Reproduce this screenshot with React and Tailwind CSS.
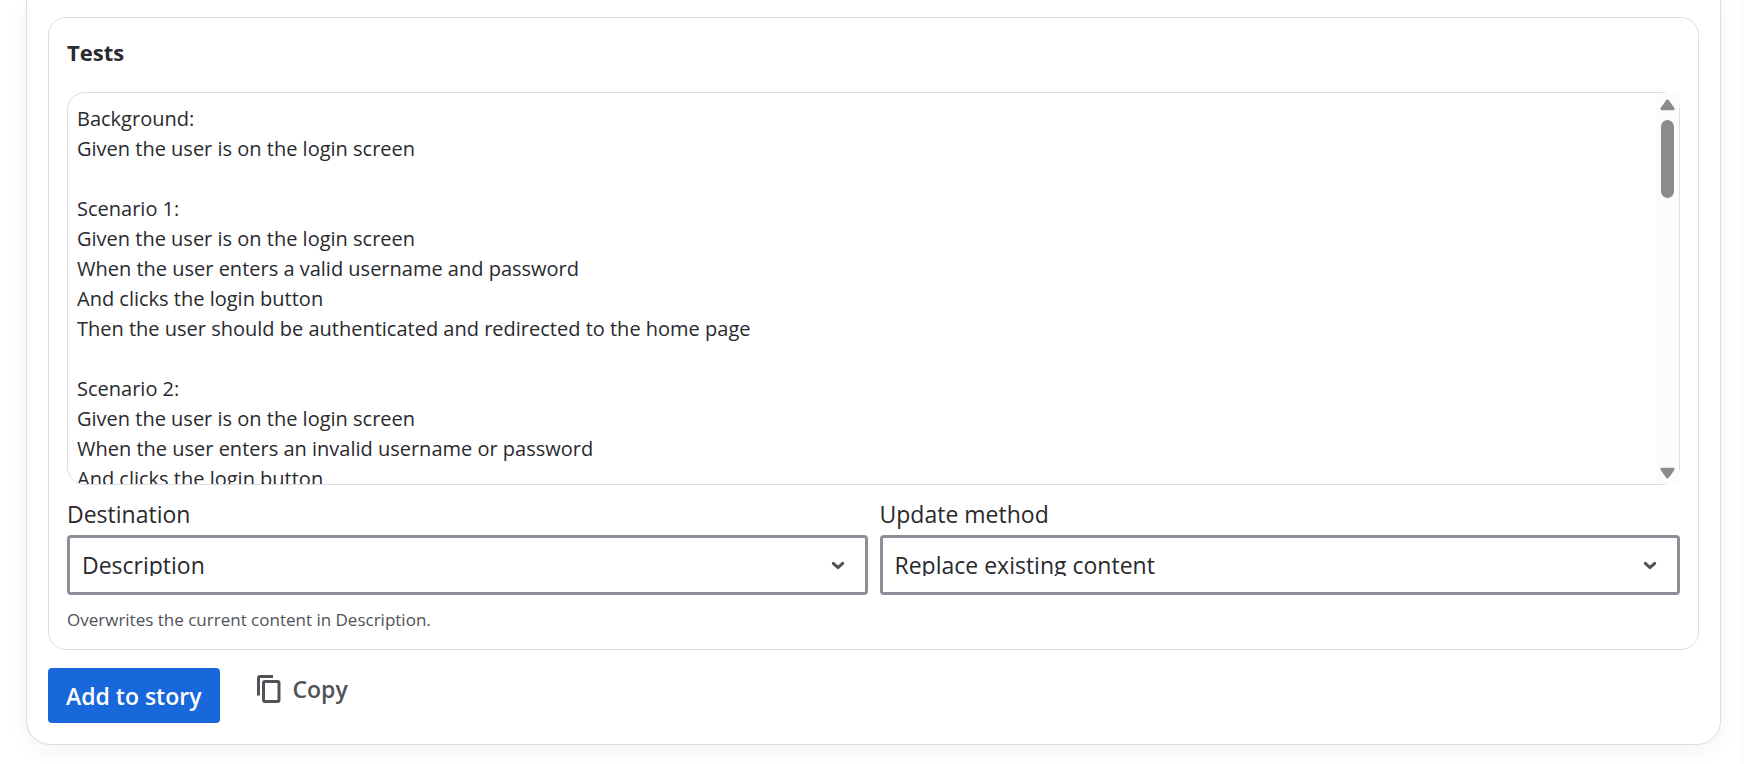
import React, { useState } from "react";

const TESTS = `Background:
Given the user is on the login screen

Scenario 1:
Given the user is on the login screen
When the user enters a valid username and password
And clicks the login button
Then the user should be authenticated and redirected to the home page

Scenario 2:
Given the user is on the login screen
When the user enters an invalid username or password
And clicks the login button`;

function ScrollTrack() {
  return (
    <div aria-hidden="true" className="pointer-events-none absolute inset-y-px right-px flex w-[23px] flex-col items-center bg-[#fcfcfc] pt-[6px] pb-[5px]">
      <svg width="15" height="12" viewBox="0 0 15 12" fill="#8b8b8b">
        <path d="M6.2 1.2Q7.5 0 8.8 1.2L14.4 9Q15.2 11 13.5 11.3H1.5Q-.2 11 .6 9Z" />
      </svg>
      <div className="mt-[9px] h-[78px] w-[13px] rounded-full bg-[#8b8b8b]" />
      <svg className="mt-auto" width="15" height="12" viewBox="0 0 15 12" fill="#8b8b8b">
        <path d="M6.2 10.8Q7.5 12 8.8 10.8L14.4 3Q15.2 1 13.5 .7H1.5Q-.2 1 .6 3Z" />
      </svg>
    </div>
  );
}

function SelectField({ id, label, options }) {
  return (
    <div className="flex min-w-0 flex-1 flex-col">
      <label htmlFor={id} className="text-[23px] leading-[30px]">{label}</label>
      <div className="relative mt-[6px]">
        <select
          id={id}
          className="block h-[60px] w-full appearance-none rounded-[4px] border-3 border-[#8c8f97] bg-white pr-12 pl-3 text-[23px] leading-[22px]"
        >
          {options.map((option) => (
            <option key={option}>{option}</option>
          ))}
        </select>
        <svg className="pointer-events-none absolute top-[26px] right-[23px]" width="14" height="10" viewBox="0 0 14 10" fill="none" stroke="#505258" strokeWidth="3" strokeLinecap="round" strokeLinejoin="round">
          <path d="M2.3 2.3 7 6.6l4.700-4.300" />
        </svg>
      </div>
    </div>
  );
}

function App() {
  const [tests, setTests] = useState(TESTS);

  return (
    <main className="flex bg-white font-['Segoe_UI','Open_Sans',sans-serif] text-[#292a2e]">
      <div className="min-w-0 flex-1 pr-[18px] pb-[19px] pl-[26px]">
        <div className="rounded-b-[24px] border border-t-0 border-[#dddee1] px-[21px] pt-[17px] pb-[21px] shadow-[0_6px_20px_rgba(30,31,33,0.05)]">
          <section className="rounded-[18px] border border-[#dddee1] px-[18px] pt-[18px] pb-[16px]">
            <h2 className="text-[22px] leading-[32px] font-bold">Tests</h2>
            <div className="relative mt-[24px]">
              <textarea
                aria-label="Tests"
                value={tests}
                onChange={(e) => setTests(e.target.value)}
                className="block h-[393px] w-full resize-none rounded-[18px] border border-[#dddee1] pt-[11px] pr-8 pl-[9px] text-[20px] leading-[30px] [scrollbar-width:none]"
              />
              <ScrollTrack />
            </div>
            <div className="mt-[14px] flex gap-3">
              <SelectField id="destination" label="Destination" options={["Description"]} />
              <SelectField id="method" label="Update method" options={["Replace existing content"]} />
            </div>
            <p className="mt-[11px] text-[17px] leading-[27px] text-[#505258]">
              Overwrites the current content in Description.
            </p>
          </section>

          <div className="mt-[18px] flex items-start">
            <button type="button" className="h-[55px] rounded-[4px] bg-[#1868db] px-[18px] text-[23px] leading-[30px] font-semibold text-white">
              Add to story
            </button>
            <button type="button" className="ml-[37px] flex h-[42px] items-center gap-3 text-[23px] leading-[30px] font-semibold text-[#505258]">
              <svg width="24" height="28" viewBox="0 0 24 28" fill="none" stroke="currentColor" strokeWidth="3">
                <path d="M1.500 20.500V3q0-1.500 1.500-1.500h13" />
                <rect x="6.500" y="6.500" width="15.500" height="20" rx="1.500" />
              </svg>
              Copy
            </button>
          </div>
        </div>
      </div>
      <div className="w-[5px] bg-[#fbfbfb]" />
    </main>
  );
}

export default App;
